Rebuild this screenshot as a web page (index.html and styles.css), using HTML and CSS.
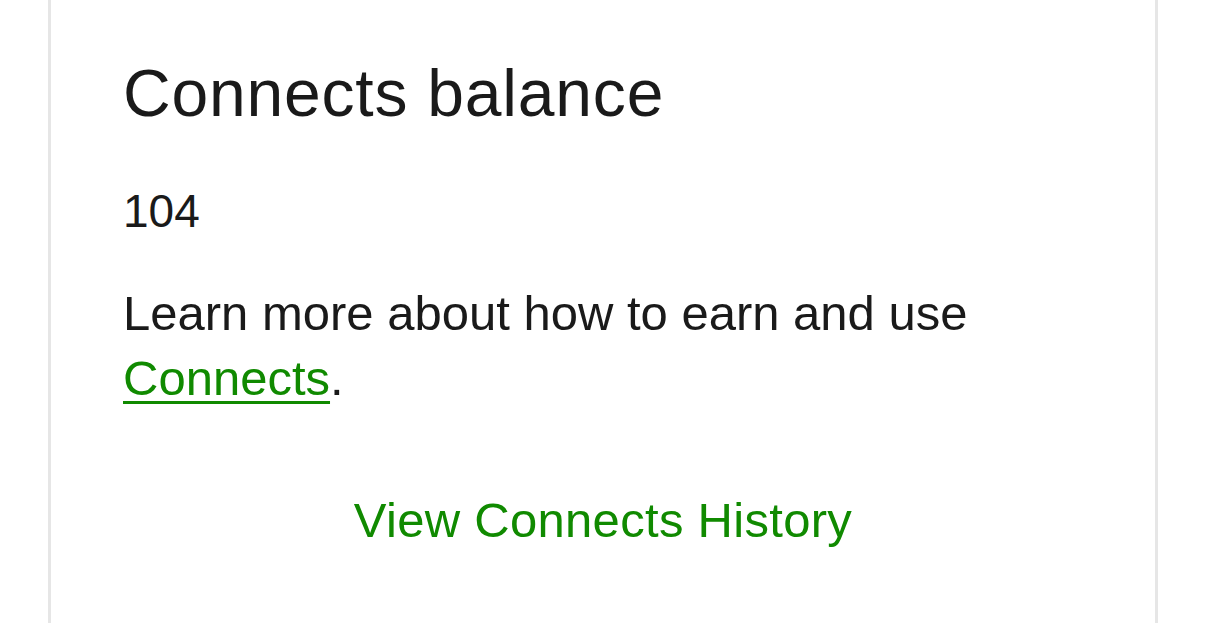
FILE: index.html
```html
<!DOCTYPE html>
<html>
<head>
<meta charset="utf-8">
<link rel="stylesheet" href="styles.css">
</head>
<body>
<div class="card">
  <h2 class="title">Connects balance</h2>
  <div class="balance">104</div>
  <p class="info">Learn more about how to earn and use <a class="link" href="#">Connects</a>.</p>
  <div class="history"><a class="history-link" href="#">View Connects History</a></div>
</div>
</body>
</html>
```
FILE: styles.css
```css
html, body {
  margin: 0;
  padding: 0;
  background: #ffffff;
}
body {
  font-family: "Liberation Sans", Arial, sans-serif;
  color: #1a1a1a;
}
.card {
  margin: 0 48px;
  border-left: 3px solid #e6e6e6;
  border-right: 3px solid #e6e6e6;
  padding: 55px 72px 0;
  height: 623px;
  box-sizing: border-box;
}
.title {
  margin: 0;
  font-size: 66px;
  line-height: 77px;
  font-weight: 400;
  letter-spacing: 0.8px;
}
.balance {
  margin-top: 49px;
  font-size: 46px;
  line-height: 60px;
}
.info {
  margin: 40px 0 0;
  font-size: 49px;
  line-height: 65px;
}
.link {
  color: #108a00;
  text-decoration: underline;
  text-decoration-thickness: 3px;
  text-underline-offset: 6px;
}
.history {
  margin-top: 77px;
  text-align: center;
  font-size: 49px;
  line-height: 65px;
  letter-spacing: 0.3px;
}
.history-link {
  color: #108a00;
  text-decoration: none;
}
```
